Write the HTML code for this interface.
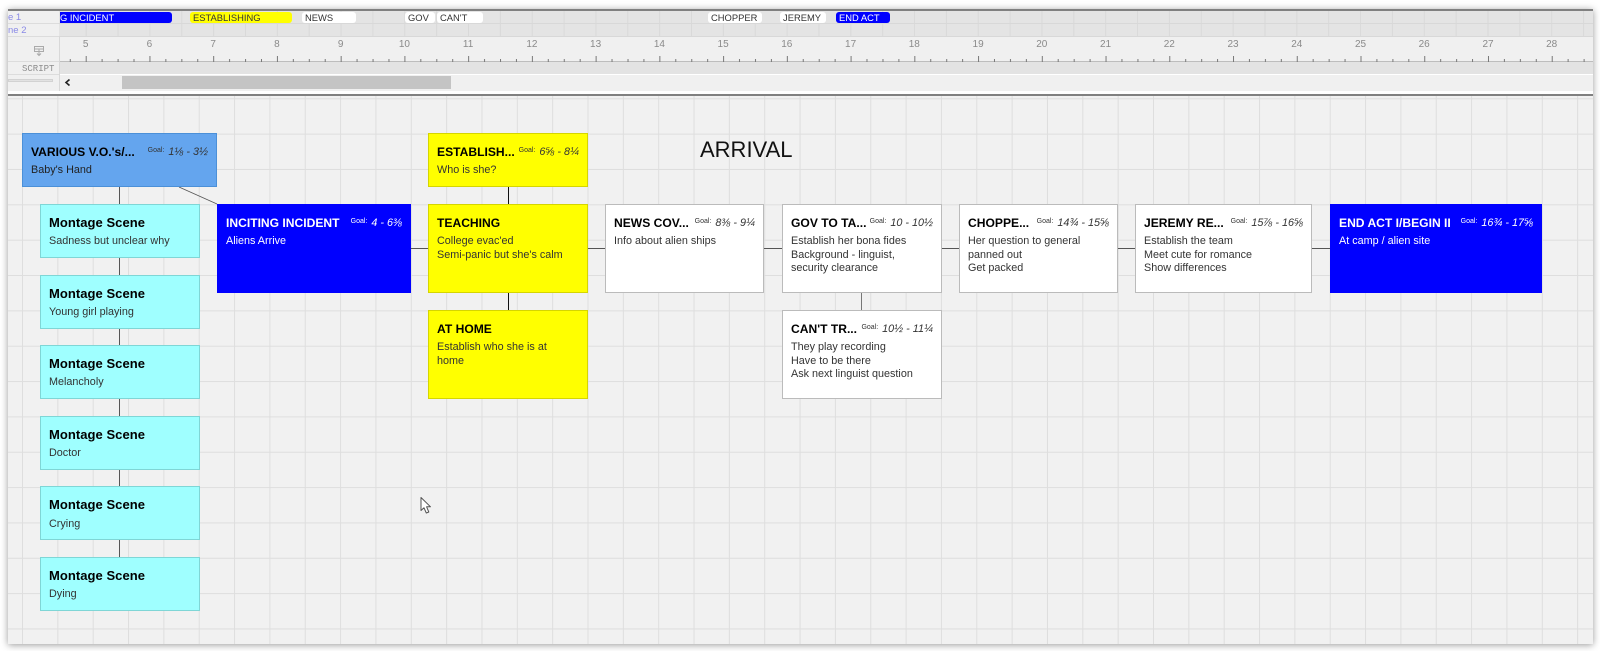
<!DOCTYPE html>
<html><head><meta charset="utf-8"><style>
html,body{margin:0;padding:0;background:#fff;width:1600px;height:651px;overflow:hidden;font-family:"Liberation Sans",sans-serif}
#f{position:absolute;left:8px;top:9px;width:1585px;height:635px;background:#f1f1f1;overflow:hidden;box-shadow:0 1px 7px rgba(0,0,0,.4)}
#o{position:absolute;left:-8px;top:-9px;width:1600px;height:651px;filter:blur(.3px)}
.a{position:absolute}
.row{position:absolute;left:59px;width:1541px;background-color:#e4e4e4;background-image:linear-gradient(to right,#d9d9d9 1px,transparent 1px);background-size:31.87px 100%;background-position:26.7px 0;border-bottom:1px solid #d8d8d8;box-sizing:border-box}
.b{position:absolute;top:12px;height:11px;font-size:9.4px;line-height:11px;padding-left:3px;box-sizing:border-box;border-radius:3px;white-space:nowrap;color:#333;background:#fff}
.n{position:absolute;top:38.5px;width:30px;margin-left:-15px;text-align:center;font-size:10px;line-height:11px;color:#8a8a8a}
#grid{position:absolute;left:8px;top:96px;width:1585px;height:548px;background-color:#f1f1f1;background-image:linear-gradient(to right,#dedede 1px,transparent 1px),linear-gradient(to bottom,#dedede 1px,transparent 1px);background-size:35.35px 35.35px;background-position:14px 2.3px}
.l{position:absolute;background:#333}
.c{position:absolute;box-sizing:border-box;border:1px solid #bbb;background:#fff;color:#333;overflow:hidden}
.c b{position:absolute;left:8px;top:10.5px;font-size:12.1px;line-height:15px;color:#000;white-space:nowrap}
.c p{position:absolute;left:8px;top:30.3px;margin:0;font-size:10.8px;line-height:13.3px;white-space:nowrap}
.c i{position:absolute;right:8px;top:12px;font-size:10.8px;line-height:13px;white-space:nowrap;color:#333}
.c i s{text-decoration:none;font-style:normal;font-size:7px;position:relative;top:-3px;margin-right:4px}
.m{left:40px;width:160px;height:54px;background:#9fffff;border-color:#7fd6d6}
.m b{font-size:13px;letter-spacing:.05px;top:10px}
.y{background:#ff0;border-color:#d5d500}
.u{background:#00f;border-color:#00f;color:#fff}.u b,.u i{color:#fff}
</style></head><body>
<div id="f"><div id="o">
<div class="a" style="left:8px;top:9px;width:1585px;height:2px;background:#808080"></div>
<div class="a" style="left:8px;top:11px;width:51px;height:80px;background:#f0f0f0;border-right:1px solid #d8d8d8"></div>
<div class="row" style="top:11px;height:13px"></div>
<div class="row" style="top:24px;height:13px"></div>
<div class="a" style="left:8px;top:23px;width:51px;height:1px;background:#dcdcdc"></div>
<div class="a" style="left:8px;top:36px;width:51px;height:1px;background:#dcdcdc"></div>
<div class="a" style="left:8px;top:61px;width:51px;height:1px;background:#dcdcdc"></div>
<div class="a" style="left:8px;top:74px;width:51px;height:1px;background:#dcdcdc"></div>
<div class="a" style="left:8px;top:11px;font-size:9.5px;line-height:13px;color:#8a8ae6;white-space:nowrap">e 1</div>
<div class="a" style="left:8px;top:24px;font-size:9.5px;line-height:13px;color:#8a8ae6;white-space:nowrap">ne 2</div>

<div class="a" style="left:60px;top:37px;width:1533px;height:24px;background:#f0f0f0"></div>
<div class="a" style="left:60px;top:61px;width:1533px;height:1px;background:#bdbdbd"></div>
<svg class="a" style="left:60px;top:54px" width="1533" height="8"><defs><pattern id="t" x="25.7" y="0" width="63.74" height="8" patternUnits="userSpaceOnUse"><rect x="0" y="2" width="1" height="6" fill="#777"/><rect x="15.9" y="5" width="1" height="3" fill="#777"/><rect x="31.9" y="5" width="1" height="3" fill="#777"/><rect x="47.8" y="5" width="1" height="3" fill="#777"/></pattern></defs><rect width="1533" height="8" fill="url(#t)"/></svg>
<div class="n" style="left:85.7px">5</div><div class="n" style="left:149.4px">6</div><div class="n" style="left:213.2px">7</div><div class="n" style="left:276.9px">8</div><div class="n" style="left:340.7px">9</div><div class="n" style="left:404.4px">10</div><div class="n" style="left:468.1px">11</div><div class="n" style="left:531.9px">12</div><div class="n" style="left:595.6px">13</div><div class="n" style="left:659.4px">14</div><div class="n" style="left:723.1px">15</div><div class="n" style="left:786.8px">16</div><div class="n" style="left:850.6px">17</div><div class="n" style="left:914.3px">18</div><div class="n" style="left:978.1px">19</div><div class="n" style="left:1041.8px">20</div><div class="n" style="left:1105.5px">21</div><div class="n" style="left:1169.3px">22</div><div class="n" style="left:1233px">23</div><div class="n" style="left:1296.8px">24</div><div class="n" style="left:1360.5px">25</div><div class="n" style="left:1424.2px">26</div><div class="n" style="left:1488px">27</div><div class="n" style="left:1551.7px">28</div>

<div class="a" style="left:60px;top:62px;width:1533px;height:12px;background:#e3e3e3"></div>
<div class="a" style="left:60px;top:74px;width:1533px;height:1px;background:#fff"></div>
<div class="a" style="left:60px;top:75px;width:1533px;height:16px;background:#f0f0f0"></div>
<div class="a" style="left:122px;top:76px;width:329px;height:13px;background:#c4c4c4"></div>
<svg class="a" style="left:64px;top:78px" width="8" height="9"><path d="M5.5 1.5 L2 4.5 L5.5 7.5" fill="none" stroke="#222" stroke-width="1.6"/></svg>
<svg class="a" style="left:33px;top:45px" width="12" height="12"><path d="M1.5 1.5H10.5V6.5H1.5Z M1.5 4H10.5 M6 3.5V10.5 M4 8.5L6 10.5L8 8.5" fill="none" stroke="#aaa" stroke-width="1"/></svg>
<div class="a" style="left:22px;top:63.5px;font-family:'Liberation Mono',monospace;font-size:9px;line-height:10px;color:#8d8d8d">SCRIPT</div>
<div class="a" style="left:8px;top:79px;width:45px;height:3px;background:#e2e2e2;border:1px solid #d2d2d2;box-sizing:border-box"></div>

<div class="b" style="left:60px;width:112px;background:#00f;color:#fff;border-radius:0 3px 3px 0;padding-left:0">G INCIDENT</div>
<div class="b" style="left:190px;width:102px;background:#ff0">ESTABLISHING</div>
<div class="b" style="left:302px;width:54px">NEWS</div>
<div class="b" style="left:405px;width:30px">GOV</div>
<div class="b" style="left:437px;width:46px">CAN'T</div>
<div class="b" style="left:708px;width:54px">CHOPPER</div>
<div class="b" style="left:780px;width:46px">JEREMY</div>
<div class="b" style="left:836px;width:54px;background:#00f;color:#fff">END ACT</div>

<div class="a" style="left:8px;top:91px;width:1585px;height:3px;background:#fff"></div>
<div class="a" style="left:8px;top:94px;width:1585px;height:2px;background:#808080"></div>
<div id="grid"></div>

<div class="l" style="left:119px;top:187px;width:1px;height:370px;background:#555"></div>
<svg class="a" style="left:170px;top:184px" width="50" height="22"><path d="M9 3L47 20" stroke="#555" stroke-width=".8" fill="none"/></svg>
<div class="l" style="left:411px;top:248px;width:900px;height:1px;background:#555"></div>
<div class="l" style="left:1312px;top:248px;width:18px;height:1px;background:#555"></div>
<div class="l" style="left:508px;top:187px;width:1px;height:123px;background:#111"></div>
<div class="l" style="left:861px;top:293px;width:1px;height:17px;background:#777"></div>

<div class="c" style="left:22px;top:133px;width:195px;height:54px;background:#64a5ee;border-color:#4b90d8;color:#222"><b>VARIOUS V.O.'s/...</b><i><s>Goal:</s>1⅛ - 3½</i><p>Baby's Hand</p></div>
<div class="c m" style="top:204px"><b>Montage Scene</b><p>Sadness but unclear why</p></div>
<div class="c m" style="top:274.6px"><b>Montage Scene</b><p>Young girl playing</p></div>
<div class="c m" style="top:345.2px"><b>Montage Scene</b><p>Melancholy</p></div>
<div class="c m" style="top:415.8px"><b>Montage Scene</b><p>Doctor</p></div>
<div class="c m" style="top:486.4px"><b>Montage Scene</b><p>Crying</p></div>
<div class="c m" style="top:557px"><b>Montage Scene</b><p>Dying</p></div>
<div class="c u" style="left:217px;top:204px;width:194px;height:89px"><b>INCITING INCIDENT</b><i><s>Goal:</s>4 - 6⅜</i><p>Aliens Arrive</p></div>
<div class="c y" style="left:428px;top:133px;width:160px;height:54px"><b>ESTABLISH...</b><i><s>Goal:</s>6⅝ - 8¼</i><p>Who is she?</p></div>
<div class="c y" style="left:428px;top:204px;width:160px;height:89px"><b>TEACHING</b><p>College evac'ed<br>Semi-panic but she's calm</p></div>
<div class="c y" style="left:428px;top:310px;width:160px;height:89px"><b>AT HOME</b><p>Establish who she is at<br>home</p></div>
<div class="c" style="left:605px;top:204px;width:159px;height:89px"><b>NEWS COV...</b><i><s>Goal:</s>8⅜ - 9¼</i><p>Info about alien ships</p></div>
<div class="c" style="left:782px;top:204px;width:160px;height:89px"><b>GOV TO TA...</b><i><s>Goal:</s>10 - 10½</i><p>Establish her bona fides<br>Background - linguist,<br>security clearance</p></div>
<div class="c" style="left:782px;top:310px;width:160px;height:89px"><b>CAN'T TR...</b><i><s>Goal:</s>10½ - 11¼</i><p>They play recording<br>Have to be there<br>Ask next linguist question</p></div>
<div class="c" style="left:959px;top:204px;width:159px;height:89px"><b>CHOPPE...</b><i><s>Goal:</s>14¾ - 15⅝</i><p>Her question to general<br>panned out<br>Get packed</p></div>
<div class="c" style="left:1135px;top:204px;width:177px;height:89px"><b>JEREMY RE...</b><i><s>Goal:</s>15⅞ - 16⅝</i><p>Establish the team<br>Meet cute for romance<br>Show differences</p></div>
<div class="c u" style="left:1330px;top:204px;width:212px;height:89px"><b>END ACT I/BEGIN II</b><i><s>Goal:</s>16¾ - 17⅝</i><p>At camp / alien site</p></div>

<div class="a" style="left:700px;top:137px;font-size:22px;line-height:26px;color:#111;white-space:nowrap">ARRIVAL</div>
<svg class="a" style="left:419px;top:496px" width="14" height="20"><path d="M2 1.5V14.5L5 11.8L7.3 17L9.8 16L7.6 10.8H11.5Z" fill="#fff" stroke="#555" stroke-width="1" stroke-linejoin="round"/></svg>
</div></div>
</body></html>
